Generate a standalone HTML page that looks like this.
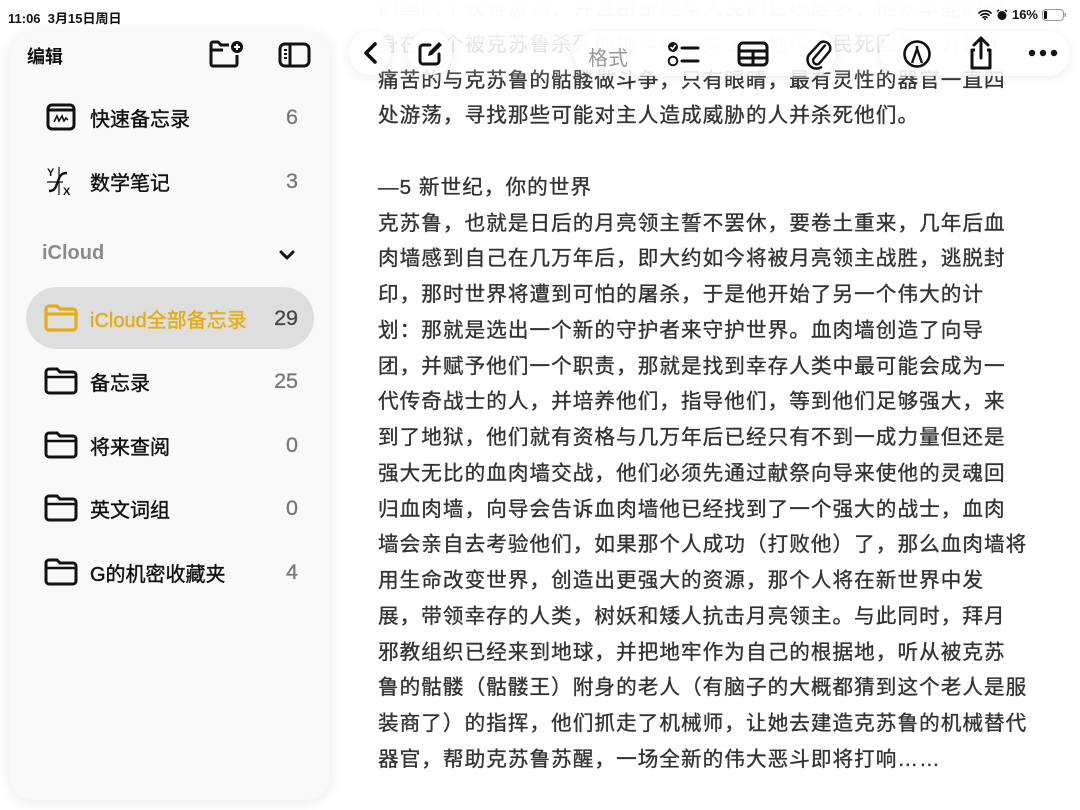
<!DOCTYPE html>
<html><head><meta charset="utf-8"><style>
*{margin:0;padding:0;box-sizing:border-box}
body{width:1080px;height:810px;overflow:hidden;background:#fff;font-family:"Liberation Sans","Noto Sans CJK SC",sans-serif;position:relative}
.status{position:absolute;top:8px;left:8px;font-size:13px;font-weight:bold;color:#111;z-index:10}
.sr{position:absolute;top:7px;right:14px;font-size:13px;font-weight:bold;color:#111;z-index:10;display:flex;align-items:center;gap:4px}
.side{position:absolute;left:10px;top:32px;width:320px;height:768px;background:#f9f9f9;border-radius:22px;box-shadow:0 2px 14px rgba(0,0,0,.09);z-index:5}
.hdr{position:absolute;left:17px;top:11px;font-size:18px;font-weight:bold;color:#111}
.row{position:absolute;left:16px;width:288px;height:62px;display:flex;align-items:center;font-size:20px;color:#111;-webkit-text-stroke:0.4px #111}
.row .ic{width:34px;margin-left:18px;margin-right:12px;display:flex;justify-content:center}
.row .n{position:absolute;right:16px;color:#777;font-size:21.5px;-webkit-text-stroke:0.3px #777}
.sel{background:#dedede;border-radius:31px}
.note{position:absolute;left:378px;top:-9px;font-size:20.6px;letter-spacing:1.05px;line-height:35.75px;color:#333;white-space:nowrap;-webkit-text-stroke:0.35px #333}
.fade{position:absolute;left:340px;top:0;width:740px;height:82px;background:linear-gradient(#fff 0%,rgba(255,255,255,.75) 45%,rgba(255,255,255,0) 100%);z-index:3}
.pill{position:absolute;top:31px;height:45px;background:rgba(255,255,255,.85);border-radius:23px;box-shadow:0 2px 12px rgba(0,0,0,.07);z-index:4}
.tb{position:absolute;z-index:6}
</style></head><body>
<div class="status">11:06&nbsp;&nbsp;3月15日周日</div>
<div class="sr">
<svg width="14" height="11" viewBox="0 0 14 11"><path d="M1 4a9 9 0 0 1 12 0M3 6.3a6 6 0 0 1 8 0M5 8.5a3 3 0 0 1 4 0" stroke="#111" stroke-width="1.7" fill="none" stroke-linecap="round"/><circle cx="7" cy="10" r="1" fill="#111"/></svg>
<svg width="12" height="12" viewBox="0 0 12 12"><circle cx="6" cy="6.5" r="4.5" fill="#111"/><path d="M1 2.5l2-1.5M11 2.5l-2-1.5" stroke="#111" stroke-width="1.5"/></svg>
<span>16%</span>
<svg width="24" height="12" viewBox="0 0 24 12"><rect x="0.5" y="0.5" width="21" height="11" rx="3.5" fill="none" stroke="#999"/><rect x="2" y="2" width="3" height="8" rx="1" fill="#111"/><rect x="22.5" y="4" width="1.5" height="4" rx=".7" fill="#999"/></svg>
</div>

<div class="note">
<span style="color:#c4c4c4;-webkit-text-stroke:0">的黑陶下获得意识，并且由于地牢人民的亡魂居多，他就本能的附</span><br>
<span style="color:#bbb;-webkit-text-stroke:0">身在一个被克苏鲁杀死的地牢中，身上，地牢人民死回生，开始了</span><br>
痛苦的与克苏鲁的骷髅做斗争，只有眼睛，最有灵性的器官一直四<br>
处游荡，寻找那些可能对主人造成威胁的人并杀死他们。<br>
<br>
—5 新世纪，你的世界<br>
克苏鲁，也就是日后的月亮领主誓不罢休，要卷土重来，几年后血<br>
肉墙感到自己在几万年后，即大约如今将被月亮领主战胜，逃脱封<br>
印，那时世界将遭到可怕的屠杀，于是他开始了另一个伟大的计<br>
划：那就是选出一个新的守护者来守护世界。血肉墙创造了向导<br>
团，并赋予他们一个职责，那就是找到幸存人类中最可能会成为一<br>
代传奇战士的人，并培养他们，指导他们，等到他们足够强大，来<br>
到了地狱，他们就有资格与几万年后已经只有不到一成力量但还是<br>
强大无比的血肉墙交战，他们必须先通过献祭向导来使他的灵魂回<br>
归血肉墙，向导会告诉血肉墙他已经找到了一个强大的战士，血肉<br>
墙会亲自去考验他们，如果那个人成功（打败他）了，那么血肉墙将<br>
用生命改变世界，创造出更强大的资源，那个人将在新世界中发<br>
展，带领幸存的人类，树妖和矮人抗击月亮领主。与此同时，拜月<br>
邪教组织已经来到地球，并把地牢作为自己的根据地，听从被克苏<br>
鲁的骷髅（骷髅王）附身的老人（有脑子的大概都猜到这个老人是服<br>
装商了）的指挥，他们抓走了机械师，让她去建造克苏鲁的机械替代<br>
器官，帮助克苏鲁苏醒，一场全新的伟大恶斗即将打响……
</div>
<div class="fade"></div>

<div class="pill" style="left:349px;width:42px;border-radius:50%;height:44px"></div>
<div class="pill" style="left:408px;width:44px;border-radius:50%;height:44px"></div>
<div class="pill" style="left:574px;width:262px"></div>
<div class="pill" style="left:880px;width:190px"></div>
<svg class="tb" style="left:360px;top:40px" width="22" height="26" viewBox="0 0 22 26"><path d="M15 4L6 13l9 9" stroke="#111" stroke-width="3.6" fill="none" stroke-linecap="round" stroke-linejoin="round"/></svg>
<svg class="tb" style="left:416px;top:40px" width="28" height="28" viewBox="0 0 28 28"><path d="M14 5H7a3 3 0 0 0-3 3v13a3 3 0 0 0 3 3h13a3 3 0 0 0 3-3v-7" stroke="#111" stroke-width="3" fill="none" stroke-linecap="round"/><path d="M12 16l1-4L23 2l3 3-10 10z" fill="#111"/></svg>
<div class="tb" style="left:588px;top:42px;font-size:20px;color:#999">格式</div>
<svg class="tb" style="left:667px;top:40px" width="34" height="28" viewBox="0 0 34 28"><circle cx="6" cy="7" r="5" fill="#111"/><path d="M3.5 7l2 2 3-4" stroke="#fff" stroke-width="1.5" fill="none"/><circle cx="6" cy="21" r="4.3" stroke="#111" stroke-width="2" fill="none"/><path d="M15 8h16M15 21h16" stroke="#111" stroke-width="3" stroke-linecap="round"/></svg>
<svg class="tb" style="left:737px;top:41px" width="32" height="26" viewBox="0 0 32 26"><rect x="2" y="2" width="28" height="22" rx="4" stroke="#111" stroke-width="3" fill="none"/><path d="M2 10h28M2 17h28M16 10v14" stroke="#111" stroke-width="3"/></svg>
<svg class="tb" style="left:804px;top:38px" width="30" height="34" viewBox="0 0 30 34"><path d="M22 10L10 24a4 4 0 0 0 6 5l11-13a7 7 0 0 0-10-9L5 20a9.5 9.5 0 0 0 13 13" stroke="#111" stroke-width="2.6" fill="none" stroke-linecap="round" transform="translate(0 -2) scale(.95)"/></svg>
<svg class="tb" style="left:902px;top:39px" width="30" height="30" viewBox="0 0 30 30"><circle cx="15" cy="15" r="12.5" stroke="#111" stroke-width="2.6" fill="none"/><path d="M10 24l5-14 5 14M15 10v-3" stroke="#111" stroke-width="2.4" fill="none" stroke-linejoin="round"/></svg>
<svg class="tb" style="left:966px;top:35px" width="30" height="36" viewBox="0 0 30 36"><path d="M15 3v20M8 10l7-7 7 7" stroke="#111" stroke-width="3" fill="none" stroke-linecap="round" stroke-linejoin="round"/><path d="M9 15H6v18h18V15h-3" stroke="#111" stroke-width="3" fill="none" stroke-linejoin="round"/></svg>
<svg class="tb" style="left:1028px;top:48px" width="30" height="10" viewBox="0 0 30 10"><circle cx="4" cy="5" r="3.2" fill="#111"/><circle cx="15" cy="5" r="3.2" fill="#111"/><circle cx="26" cy="5" r="3.2" fill="#111"/></svg>

<div class="side">
<div class="hdr">编辑</div>
<svg style="position:absolute;left:199px;top:8px" width="36" height="28" viewBox="0 0 36 28"><path d="M20 5H12l-3-3H4a2 2 0 0 0-2 2v20a2 2 0 0 0 2 2h22a2 2 0 0 0 2-2v-9" stroke="#111" stroke-width="3" fill="none"/><path d="M2 10h12" stroke="#111" stroke-width="3"/><circle cx="28" cy="7" r="6" fill="#111"/><path d="M28 4v6M25 7h6" stroke="#fff" stroke-width="2"/></svg>
<svg style="position:absolute;left:268px;top:10px" width="34" height="26" viewBox="0 0 34 26"><rect x="2" y="2" width="29" height="22" rx="5" stroke="#111" stroke-width="3" fill="none"/><path d="M12 2v22" stroke="#111" stroke-width="3"/><path d="M6 8h3M6 12h3M6 16h3" stroke="#111" stroke-width="2"/></svg>

<div class="row" style="top:54px"><span class="ic"><svg width="30" height="28" viewBox="0 0 30 28"><rect x="2" y="2" width="26" height="24" rx="4" stroke="#111" stroke-width="3" fill="none"/><path d="M2 7h26" stroke="#111" stroke-width="3"/><path d="M8 19l3-6 2 5 3-5 2 5 2-3 2 2" stroke="#111" stroke-width="1.6" fill="none"/></svg></span>快速备忘录<span class="n">6</span></div>
<div class="row" style="top:118px"><span class="ic"><svg width="32" height="32" viewBox="0 0 32 32"><text x="2" y="11" font-size="11" font-weight="bold" font-family="Liberation Sans" fill="#111">Y</text><text x="18" y="30" font-size="11" font-weight="bold" font-family="Liberation Sans" fill="#111">X</text><path d="M14 2v28M2 17h16" stroke="#111" stroke-width="1.2"/><path d="M4 26c6 0 7-4 9-10s4-8 9-8" stroke="#111" stroke-width="2.4" fill="none"/></svg></span>数学笔记<span class="n">3</span></div>
<div style="position:absolute;left:32px;top:210px;font-size:20px;font-weight:bold;color:#8a8a8a">iCloud</div>
<svg style="position:absolute;left:268px;top:216px" width="18" height="14" viewBox="0 0 18 14"><path d="M3 4l6 6 6-6" stroke="#111" stroke-width="3" fill="none" stroke-linecap="round" stroke-linejoin="round"/></svg>
<div class="row sel" style="top:255px"><span class="ic"><svg width="34" height="28" viewBox="0 0 34 28"><path d="M2 5a3 3 0 0 1 3-3h8l3 3h13a3 3 0 0 1 3 3v15a3 3 0 0 1-3 3H5a3 3 0 0 1-3-3z" stroke="#E4AD14" stroke-width="3.2" fill="none"/><path d="M2 10h30" stroke="#E4AD14" stroke-width="3"/></svg></span><span style="color:#E4AD14;-webkit-text-stroke:0.4px #E4AD14">iCloud全部备忘录</span><span class="n" style="color:#444;-webkit-text-stroke:0.3px #444">29</span></div>
<div class="row" style="top:318px"><span class="ic"><svg width="34" height="28" viewBox="0 0 34 28"><path d="M2 5a3 3 0 0 1 3-3h8l3 3h13a3 3 0 0 1 3 3v15a3 3 0 0 1-3 3H5a3 3 0 0 1-3-3z" stroke="#111" stroke-width="3" fill="none"/><path d="M2 10h30" stroke="#111" stroke-width="2.5"/></svg></span>备忘录<span class="n">25</span></div>
<div class="row" style="top:382px"><span class="ic"><svg width="34" height="28" viewBox="0 0 34 28"><path d="M2 5a3 3 0 0 1 3-3h8l3 3h13a3 3 0 0 1 3 3v15a3 3 0 0 1-3 3H5a3 3 0 0 1-3-3z" stroke="#111" stroke-width="3" fill="none"/><path d="M2 10h30" stroke="#111" stroke-width="2.5"/></svg></span>将来查阅<span class="n">0</span></div>
<div class="row" style="top:445px"><span class="ic"><svg width="34" height="28" viewBox="0 0 34 28"><path d="M2 5a3 3 0 0 1 3-3h8l3 3h13a3 3 0 0 1 3 3v15a3 3 0 0 1-3 3H5a3 3 0 0 1-3-3z" stroke="#111" stroke-width="3" fill="none"/><path d="M2 10h30" stroke="#111" stroke-width="2.5"/></svg></span>英文词组<span class="n">0</span></div>
<div class="row" style="top:509px"><span class="ic"><svg width="34" height="28" viewBox="0 0 34 28"><path d="M2 5a3 3 0 0 1 3-3h8l3 3h13a3 3 0 0 1 3 3v15a3 3 0 0 1-3 3H5a3 3 0 0 1-3-3z" stroke="#111" stroke-width="3" fill="none"/><path d="M2 10h30" stroke="#111" stroke-width="2.5"/></svg></span>G的机密收藏夹<span class="n">4</span></div>
</div>
</body></html>
